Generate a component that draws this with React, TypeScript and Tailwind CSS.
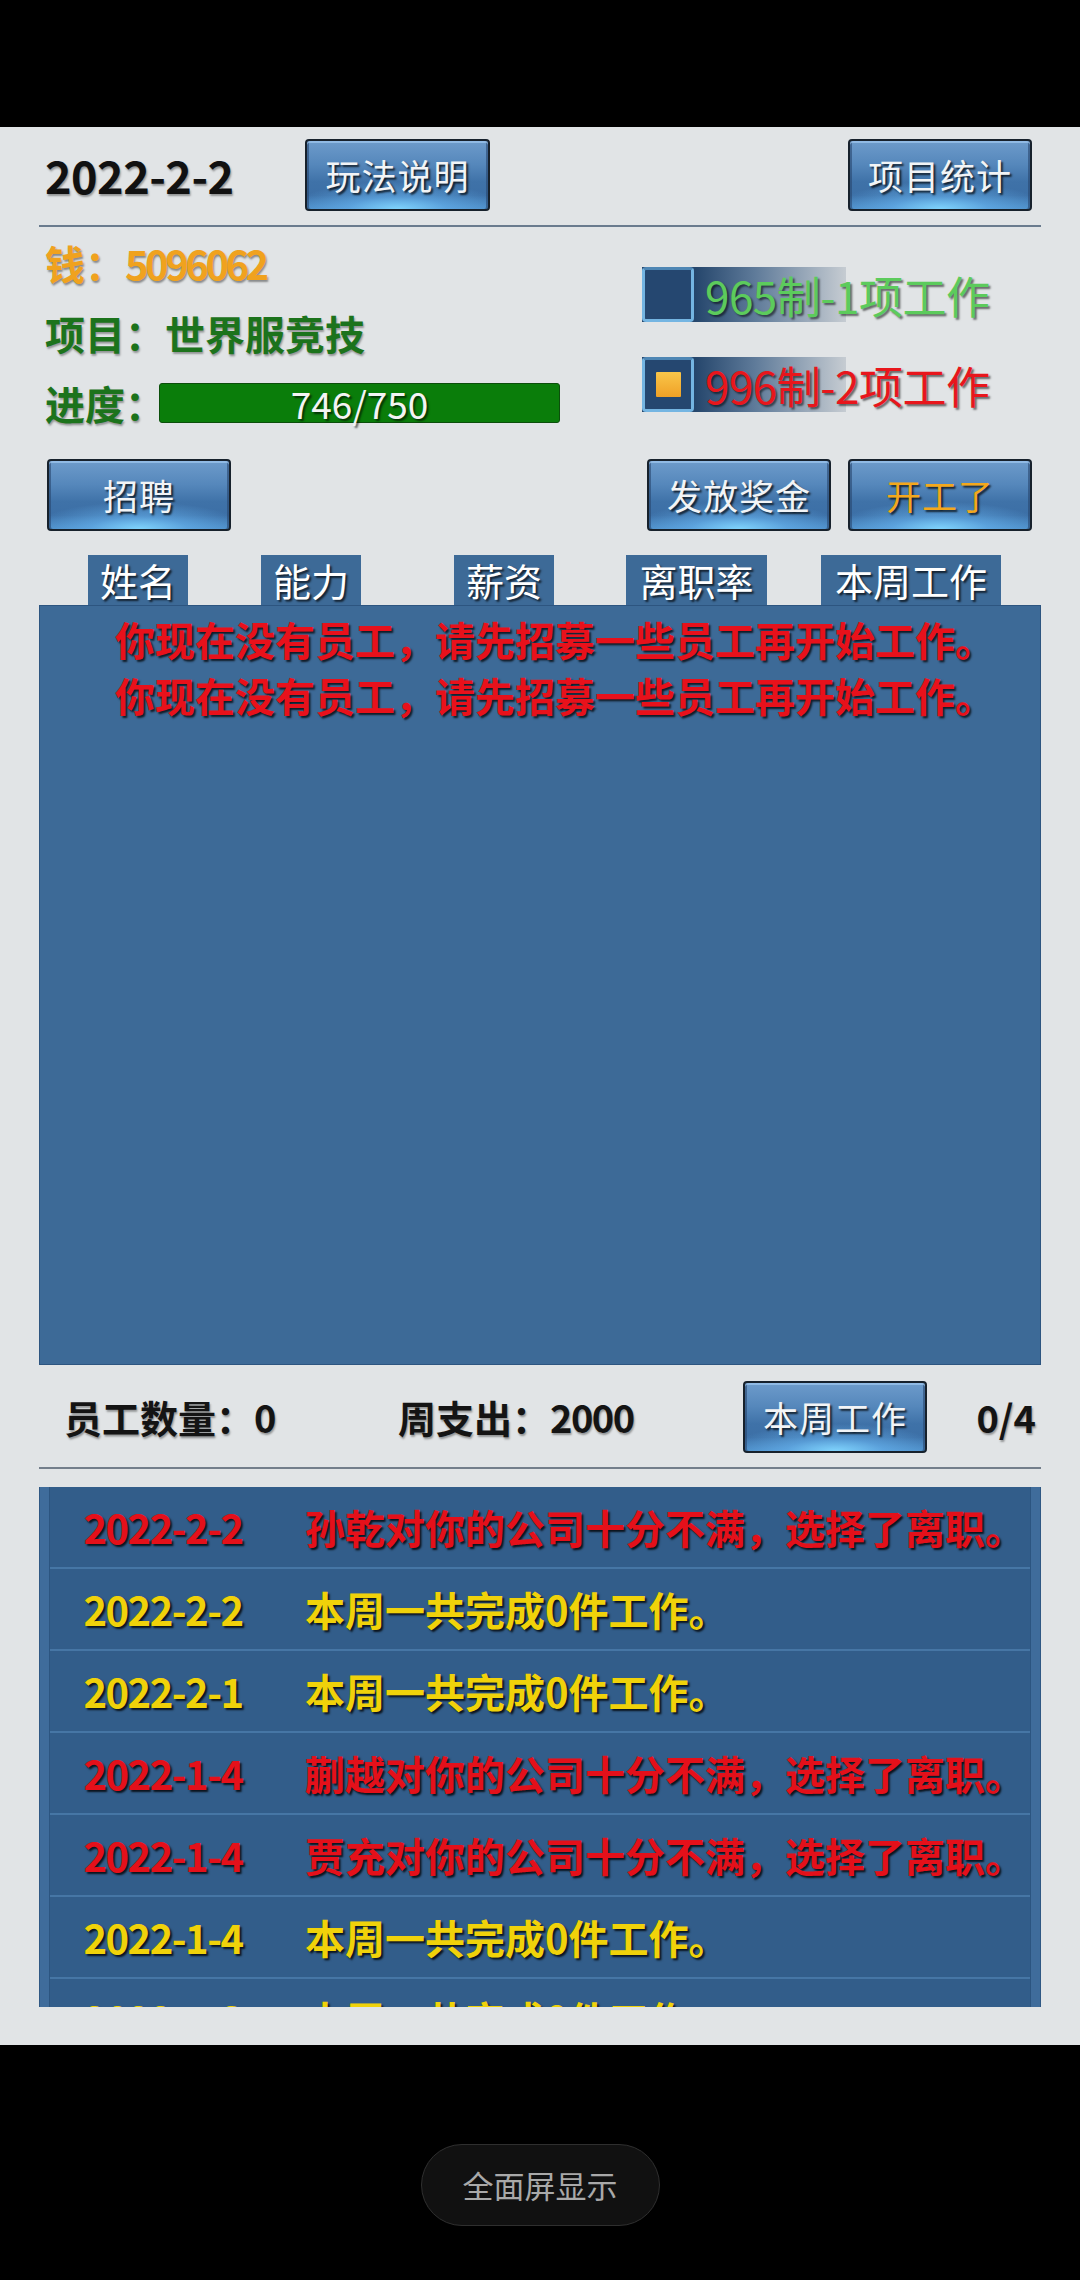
import React from "react";

const FONT = "font-['Noto_Sans_CJK_SC','Noto_Sans',sans-serif]";

function GameButton({
  children,
  className = "",
  textClass = "text-[#f2f4f6]",
}: {
  children: React.ReactNode;
  className?: string;
  textClass?: string;
}) {
  return (
    <div
      className={
        "h-[72px] w-[184px] shrink-0 flex items-center justify-center rounded-[4px] border-2 border-[#17212c] shadow-[inset_0_2px_0_rgba(160,200,240,0.7),inset_2px_0_0_rgba(40,70,110,0.6),inset_-2px_0_0_rgba(40,70,110,0.6)] bg-[radial-gradient(ellipse_60%_40%_at_50%_100%,rgba(130,215,255,0.95)_0%,rgba(110,190,250,0.5)_45%,rgba(80,150,220,0)_100%),linear-gradient(180deg,#6d9bcb_0%,#5587bb_35%,#3f72a8_60%,#3c6fa6_80%,#4c8cc6_100%)] " +
        className
      }
    >
      <span
        className={
          "text-[35px] leading-[52px] tracking-[1px] [text-shadow:2px_2px_2px_rgba(0,0,0,0.75)] " +
          textClass
        }
      >
        {children}
      </span>
    </div>
  );
}

function Tab({ children, className = "" }: { children: React.ReactNode; className?: string }) {
  return (
    <div
      className={
        "h-[50px] bg-[#3d6a97] flex items-center justify-center text-[38px] leading-[50px] text-white [text-shadow:2px_2px_2px_rgba(0,0,0,0.7)] " +
        className
      }
    >
      {children}
    </div>
  );
}

function Checkbox({ checked, label, color }: { checked: boolean; label: string; color: string }) {
  return (
    <div className="h-[55px] flex items-center bg-[linear-gradient(90deg,#25466c_0%,#25466c_26%,#5e7a99_55%,#c6ccd2_100%)] bg-no-repeat bg-[length:204px_100%]">
      <div className="w-[52px] h-[55px] rounded-[4px] border-[3px] border-[#74b5e2] border-t-[#4e86b4] bg-[#254770] flex items-center justify-center">
        {checked && (
          <div className="w-[25px] h-[25px] bg-[linear-gradient(180deg,#f9c64a_0%,#f0a126_100%)] rounded-[1px]" />
        )}
      </div>
      <span
        className={
          "ml-[11px] text-[44px] leading-[56px] whitespace-nowrap tracking-[-0.5px] [text-shadow:2px_2px_2px_rgba(0,0,0,0.55)] " +
          color
        }
      >
        {label}
      </span>
    </div>
  );
}

type Log = { date: string; msg: string; red: boolean };

const logs: Log[] = [
  { date: "2022-2-2", msg: "孙乾对你的公司十分不满，选择了离职。", red: true },
  { date: "2022-2-2", msg: "本周一共完成0件工作。", red: false },
  { date: "2022-2-1", msg: "本周一共完成0件工作。", red: false },
  { date: "2022-1-4", msg: "蒯越对你的公司十分不满，选择了离职。", red: true },
  { date: "2022-1-4", msg: "贾充对你的公司十分不满，选择了离职。", red: true },
  { date: "2022-1-4", msg: "本周一共完成0件工作。", red: false },
  { date: "2022-1-3", msg: "本周一共完成0件工作。", red: false },
];

export default function App() {
  return (
    <div className={"w-[1080px] h-[2280px] bg-black flex flex-col overflow-hidden " + FONT}>
      <div className="h-[127px] shrink-0" />
      <div className="h-[1918px] shrink-0 bg-[#e1e4e6] px-[39px] flex flex-col">
        {/* Top row */}
        <div className="mt-[12px] h-[72px] flex items-center">
          <div className="w-[266px] shrink-0 pl-[6px] text-[45px] font-bold leading-[64px] tracking-[-0.5px] text-[#111] [text-shadow:1px_2px_2px_rgba(0,0,0,0.35)]">
            2022-2-2
          </div>
          <GameButton className="w-[185px]">玩法说明</GameButton>
          <GameButton className="ml-auto mr-[9px]">项目统计</GameButton>
        </div>
        <div className="mt-[14px] h-[2px] bg-[#6a7b8e]" />

        {/* Info section */}
        <div className="h-[232px] flex">
          <div className="flex flex-col pt-[16px] gap-[30px] pl-[6px] w-[603px] shrink-0">
            <div className="h-[40px] flex items-center whitespace-nowrap text-[40px] font-bold leading-[56px] text-[#f0a21e] [text-shadow:1px_2px_2px_rgba(0,0,0,0.4)]">
              钱：<span className="tracking-[-3.5px]">5096062</span>
            </div>
            <div className="h-[40px] flex items-center whitespace-nowrap text-[40px] font-bold leading-[56px] text-[#1c731c] [text-shadow:1px_2px_2px_rgba(0,0,0,0.35)]">
              项目：世界服竞技
            </div>
            <div className="h-[40px] flex items-center">
              <span className="w-[114px] shrink-0 whitespace-nowrap text-[40px] font-bold leading-[56px] text-[#1c731c] [text-shadow:1px_2px_2px_rgba(0,0,0,0.35)]">
                进度：
              </span>
              <div className="w-[401px] h-[40px] shrink-0 rounded-[3px] border border-[#0b4f0b] bg-[#0a7d0a] flex items-center justify-center text-[37px] leading-[40px] text-[#f4f4f4] [text-shadow:2px_2px_2px_rgba(0,0,0,0.6)]">
                746/750
              </div>
            </div>
          </div>
          <div className="flex flex-col pt-[40px] gap-[35px]">
            <Checkbox checked={false} label="965制-1项工作" color="text-[#5ccb5c]" />
            <Checkbox checked={true} label="996制-2项工作" color="text-[#e8161c]" />
          </div>
        </div>

        {/* Action buttons */}
        <div className="h-[72px] flex items-center">
          <GameButton className="ml-[8px]">招聘</GameButton>
          <GameButton className="ml-auto">发放奖金</GameButton>
          <GameButton className="ml-[17px] mr-[9px]" textClass="text-[#f4a81c]">
            开工了
          </GameButton>
        </div>

        {/* Tabs */}
        <div className="mt-[24px] flex items-end">
          <Tab className="ml-[49px] w-[100px]">姓名</Tab>
          <Tab className="ml-[73px] w-[100px]">能力</Tab>
          <Tab className="ml-[93px] w-[100px]">薪资</Tab>
          <Tab className="ml-[72px] w-[141px]">离职率</Tab>
          <Tab className="ml-[54px] w-[180px]">本周工作</Tab>
        </div>

        {/* Employee panel */}
        <div className="h-[760px] bg-[#3d6a97] border border-[#2d5580] pt-[5px] flex flex-col items-center text-[40px] font-bold leading-[56px] text-[#e8111b] [text-shadow:2px_2px_2px_rgba(0,0,0,0.75)]">
          <div className="pl-[30px] whitespace-nowrap">你现在没有员工，请先招募一些员工再开始工作。</div>
          <div className="pl-[30px] whitespace-nowrap">你现在没有员工，请先招募一些员工再开始工作。</div>
        </div>

        {/* Stats row */}
        <div className="mt-[16px] h-[71px] flex items-center text-[38px] font-bold leading-[62px] text-[#141414]">
          <div className="ml-[25px] w-[334px] shrink-0 whitespace-nowrap [text-shadow:1px_2px_2px_rgba(0,0,0,0.35)]">
            员工数量：0
          </div>
          <div className="w-[345px] shrink-0 whitespace-nowrap [text-shadow:1px_2px_2px_rgba(0,0,0,0.35)]">
            周支出：<span className="tracking-[-1.5px]">2000</span>
          </div>
          <GameButton className="font-normal">本周工作</GameButton>
          <div className="ml-auto mr-[5px] [text-shadow:1px_2px_2px_rgba(0,0,0,0.35)]">0/4</div>
        </div>
        <div className="mt-[15px] h-[2px] bg-[#737e8b]" />

        {/* Log panel */}
        <div className="mt-[18px] h-[520px] bg-[#3f6c9b] border-l border-r border-[#2f5884] px-[9px] overflow-hidden">
          <div className="bg-[#325d8a] border-l border-r border-[#2c5580]">
            {logs.map((l, i) => (
              <div
                key={i}
                className="h-[82px] border-b-2 border-[#4676a5] flex items-center text-[40px] font-bold leading-[56px] [text-shadow:2px_2px_2px_rgba(0,0,0,0.8)]"
              >
                <div
                  className={
                    "w-[226px] shrink-0 text-center tracking-[-1.5px] " +
                    (l.red ? "text-[#e4101a]" : "text-[#f0d20a]")
                  }
                >
                  {l.date}
                </div>
                <div
                  className={
                    "ml-[29px] whitespace-nowrap " + (l.red ? "text-[#e4101a]" : "text-[#f0d20a]")
                  }
                >
                  {l.msg}
                </div>
              </div>
            ))}
          </div>
        </div>
      </div>

      {/* Bottom black area */}
      <div className="flex-1 flex justify-center">
        <div className="mt-[99px] w-[239px] h-[82px] rounded-full bg-[#111111] border border-[#2f2f2f] flex items-center justify-center text-[31px] leading-[44px] text-[#a9a9a9]">
          全面屏显示
        </div>
      </div>
    </div>
  );
}
